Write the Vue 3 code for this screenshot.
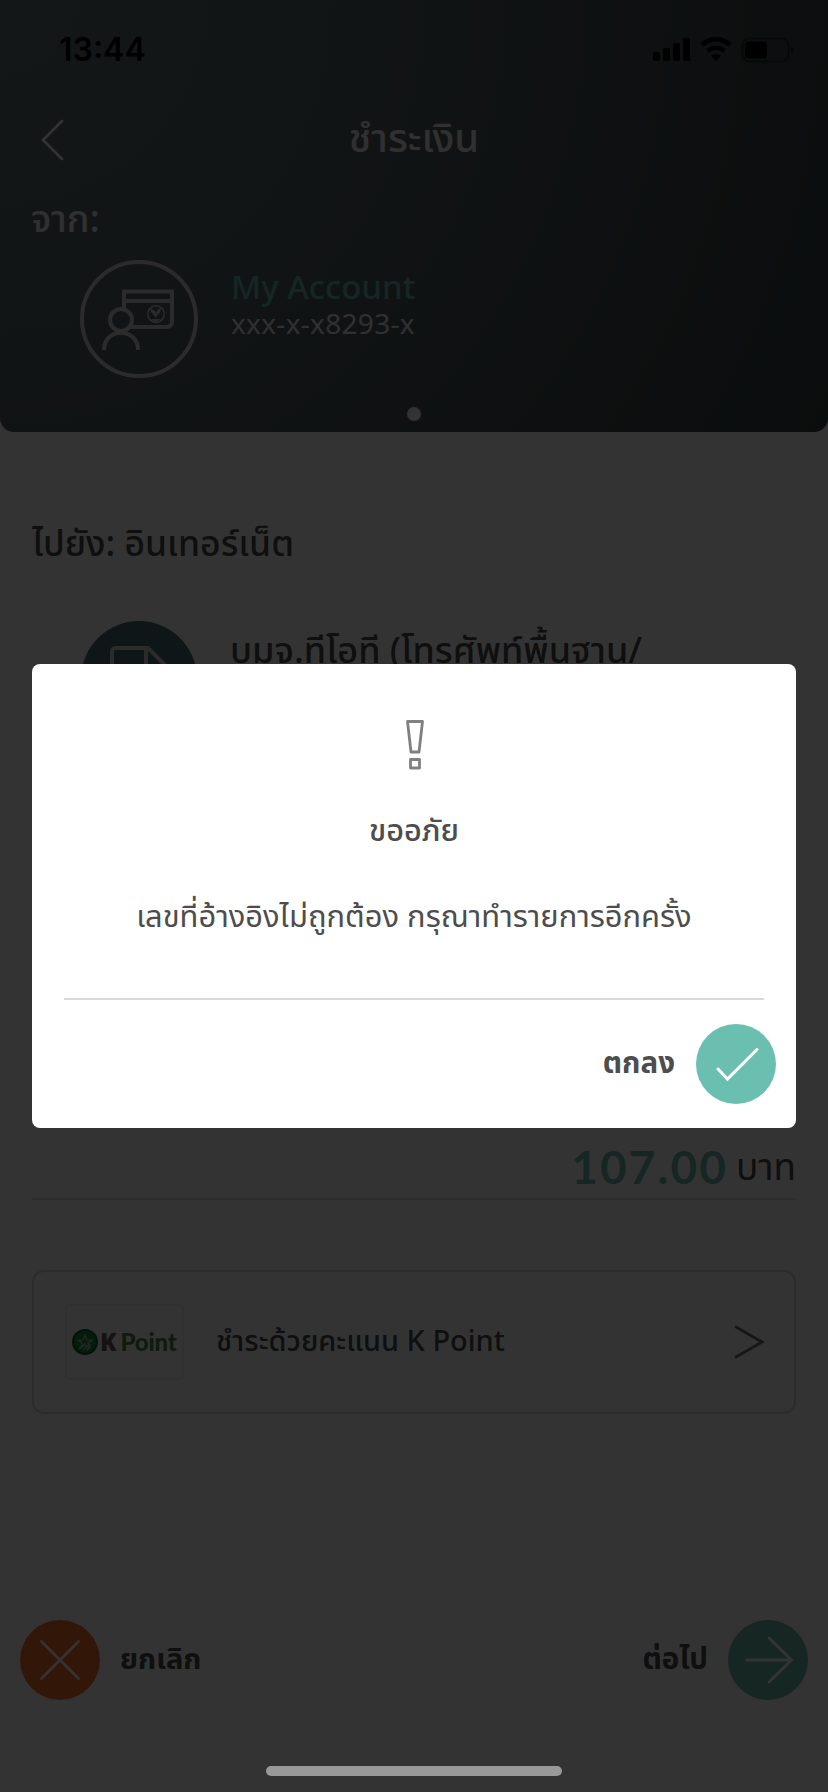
<script setup>
const bars = [9, 13, 18, 23]
</script>

<template>
  <div class="screen">
    <header class="hero">
      <div class="status">
        <span class="time">13:44</span>
        <div class="indicators">
          <div class="signal">
            <i v-for="h in bars" :key="h" :style="{ height: h + 'px' }"></i>
          </div>
          <svg class="wifi" width="32" height="24" viewBox="0 0 32 24">
            <path d="M2 8.2C10 .2 22 .2 30 8.2" fill="none" stroke="#000" stroke-width="4.6" />
            <path d="M7.6 14.2c5-4.6 11.800-4.600 16.800 0" fill="none" stroke="#000" stroke-width="4.400" />
            <path d="M11 18.700c3-2.400 7-2.400 10 0L16 24z" />
          </svg>
          <svg class="battery" width="54" height="26" viewBox="0 0 54 26">
            <rect x="1.500" y="1.500" width="46" height="23" rx="7" fill="none" stroke="#000" stroke-opacity=".4" stroke-width="2" />
            <rect x="4" y="4.500" width="22" height="17" rx="3.500" />
            <path d="M50 9c3.500 1.500 3.500 6.500 0 8z" fill-opacity=".5" />
          </svg>
        </div>
      </div>

      <nav class="nav">
        <svg class="back" width="24" height="42" viewBox="0 0 24 42">
          <path d="M21 2 2 21l19 19" fill="none" stroke="#fff" stroke-width="2.600" stroke-linecap="round" />
        </svg>
        <h1 class="title"><span>ชำระเงิน</span></h1>
      </nav>

      <div class="from"><span>จาก:</span></div>

      <div class="account">
        <svg class="avatar" width="118" height="118" viewBox="0 0 118 118">
          <g fill="none" stroke="#d8d8d8" stroke-width="4">
            <circle cx="59" cy="59" r="57" />
            <path d="M44 50V31.500h48V61q0 6-6 6H50M44 41h48" />
            <circle cx="41" cy="60" r="11" />
            <path d="M24 90c0-23 34-23 34 0" />
          </g>
          <circle cx="76" cy="54" r="8.300" fill="none" stroke="#d8d8d8" stroke-width="1.500" />
          <path d="M70 48l5 3 1.500 2 1-3 3.500-2-1 5-3 2-1 3-2-3-3-3zM71 59h10l-4 2h-3z" fill="#d8d8d8" />
        </svg>
        <div class="who">
          <div class="name"><span>My Account</span></div>
          <div class="number"><span>xxx-x-x8293-x</span></div>
        </div>
      </div>
      <div class="dot"></div>
    </header>

    <main class="body">
      <h2 class="to"><span>ไปยัง: อินเทอร์เน็ต</span></h2>
      <div class="payee">
        <svg width="118" height="118" viewBox="0 0 118 118">
          <circle cx="59" cy="59" r="58" fill="#4b7075" />
          <path d="M32 90V32q0-4 4-4h32l20 20v42zM66 28v22h22" fill="none" stroke="#d8d8d8" stroke-width="4" />
        </svg>
        <div class="payee-name"><span>บมจ.ทีโอที (โทรศัพท์พื้นฐาน/</span></div>
      </div>
      <div class="amount">
        <span class="value">107.00</span>
        <span class="unit">บาท</span>
      </div>
      <div class="points">
        <div class="logo">
          <svg width="26" height="28" viewBox="0 0 26 28">
            <circle cx="13" cy="14" r="12" fill="#168a40" stroke="#086028" stroke-width="2" />
            <path d="m13 7 2 5 5 .3-4 3 1.300 4.500L13 17l-4.300 2.800L10 15.300l-4-3 5-.3z" fill="none" stroke="#a8c8b0" stroke-width="1.200" />
            <path d="m7 21 7-6M11 22l7-6M15 22l4-4" stroke="#a8c8b0" stroke-width="1.200" />
          </svg>
          <b class="k">K</b><b class="point">Point</b>
        </div>
        <div class="points-label"><span>ชำระด้วยคะแนน K Point</span></div>
        <svg class="go" width="30" height="34" viewBox="0 0 30 34">
          <path d="m2 2 26 15L2 32" fill="none" stroke="#707070" stroke-width="2.800" stroke-linecap="round" />
        </svg>
      </div>
    </main>

    <footer class="actions">
      <div class="action">
        <svg width="80" height="80" viewBox="0 0 80 80">
          <circle cx="40" cy="40" r="40" fill="#fa7530" />
          <path d="m21.500 21.500 37 37M58.500 21.500l-37 37" stroke="#fff" stroke-width="2.800" stroke-linecap="round" />
        </svg>
        <span class="cancel">ยกเลิก</span>
      </div>
      <div class="action">
        <span class="next">ต่อไป</span>
        <svg width="80" height="80" viewBox="0 0 80 80">
          <circle cx="40" cy="40" r="40" fill="#6bbfb0" />
          <path d="M18.500 40h45M41 18l22.500 22L41 62" fill="none" stroke="#fff" stroke-width="2.800" stroke-linecap="round" />
        </svg>
      </div>
    </footer>

    <div class="overlay">
      <section class="dialog">
        <svg class="bang" width="20" height="52" viewBox="0 0 20 52">
          <g fill="none" stroke="#808080" stroke-width="2.800" stroke-linejoin="round">
            <path d="M2.500 2.500h15L14 33H6z" />
            <path d="M5.500 40.500h9v8.500h-9z" />
          </g>
        </svg>
        <div class="sorry"><span>ขออภัย</span></div>
        <p class="message"><span>เลขที่อ้างอิงไม่ถูกต้อง กรุณาทำรายการอีกครั้ง</span></p>
        <div class="confirm">
          <span class="ok">ตกลง</span>
          <svg width="80" height="80" viewBox="0 0 80 80">
            <circle cx="40" cy="40" r="40" fill="#6bbfb0" />
            <path d="m22 45 9.500 10L61 25.500" fill="none" stroke="#fff" stroke-width="3" stroke-linecap="round" />
          </svg>
        </div>
      </section>
      <div class="home"></div>
    </div>
  </div>
</template>

<style>
body { margin: 0; background: #fff; }
</style>

<style scoped>
.screen {
  position: relative;
  display: flex;
  flex-direction: column;
  width: 828px;
  height: 1792px;
  overflow: hidden;
  box-sizing: border-box;
  background: #fff;
  color: #4d4d4d;
  font-family: "Noto Sans Thai", "Noto Sans", "Open Sans", sans-serif;
  white-space: nowrap;
}
svg { display: block; flex: none; }
h1, h2, p { margin: 0; font-weight: 500; }
.hero {
  height: 432px;
  border-radius: 0 0 14px 14px;
  background: radial-gradient(circle at 0 0, #627478 0%, #59686b 35%, #434e51 75%, #364043 100%);
  color: #fff;
}
.status {
  display: flex;
  justify-content: space-between;
  height: 88px;
  padding: 0 33px 0 59px;
  color: #000;
}
.time { font: 600 32px/40px Inter, sans-serif; margin-top: 30px; }
.indicators { display: flex; align-items: flex-start; padding-top: 37px; }
.signal { display: flex; align-items: flex-end; gap: 3px; height: 24px; margin-right: 10px; }
.signal i { width: 7px; background: #000; border-radius: 1.500px; }
.wifi { margin-right: 9px; }
.nav { display: flex; align-items: center; height: 104px; padding-left: 41px; }
.back { margin-right: -65px; }
.title { flex: 1; text-align: center; font-size: 40px; line-height: 50px; color: #eee; }
.from { padding-left: 31px; height: 68px; font-size: 37.500px; line-height: 57px; font-weight: 500; color: #eee; }
.account { display: flex; gap: 33px; padding-left: 80px; height: 118px; }
.name { margin-top: 10px; font-size: 33px; line-height: 38px; font-weight: 500; color: #6bbfb0; }
.number { font-size: 28px; line-height: 35px; letter-spacing: .3px; color: #eee; }
.dot { width: 14px; height: 14px; margin: 29px auto 0; border-radius: 50%; background: #fff; }
.body { display: flex; flex-direction: column; padding: 0 32px; }
.to { margin-top: 82px; height: 106px; font-size: 35.500px; line-height: 62px; }
.payee { display: flex; gap: 32px; padding-left: 48px; height: 526px; }
.payee-name { font-size: 36px; line-height: 65px; font-weight: 500; }
.amount { display: flex; align-items: baseline; justify-content: flex-end; box-sizing: border-box; height: 54px; padding-bottom: 4px; gap: 8px; border-bottom: 2px solid #e2e2e2; }
.value { font: 700 46px/50px Lato, sans-serif; letter-spacing: 2.100px; color: #6bbfb0; transform: translateY(-4px); }
.unit { font-size: 37px; line-height: 50px; padding-right: 0; transform: translateY(-8px); }
.points { box-sizing: border-box; display: flex; align-items: center; height: 144px; margin-top: 70px; border: 2px solid #d6d6d6; border-radius: 12px; padding: 0 30px 0 31px; }
.logo { box-sizing: border-box; display: flex; align-items: center; width: 119px; height: 76px; border: 2px solid #f0f0f0; border-radius: 5px; padding-left: 5px; font: 700 24px/30px "Open Sans", sans-serif; }
.k { margin-left: 2px; color: #6a5c58; }
.point { margin-left: 4px; font-size: 24px; letter-spacing: -.2px; color: #4e8550; font-family: Lato, sans-serif; }
.points-label { flex: 1; margin-left: 32px; font-size: 28.900px; font-weight: 500; }
.actions { display: flex; justify-content: space-between; padding: 206px 20px 0; font-size: 29px; font-weight: 700; }
.action { display: flex; align-items: center; gap: 20px; }
.next { font-size: 29.500px; }
.overlay { position: absolute; inset: 0; background: rgba(0, 0, 0, .8); }
.dialog { box-sizing: border-box; width: 764px; height: 464px; margin: 664px auto 0; border-radius: 8px; background: #fff; display: flex; flex-direction: column; align-items: center; padding-top: 55px; }
.bang { margin-left: 1px; }
.sorry { margin-top: 36px; font-size: 30.700px; line-height: 50px; font-weight: 500; }
.message { display: flex; align-items: flex-start; justify-content: center; box-sizing: border-box; width: 700px; height: 143px; padding-top: 36px; font-size: 30.900px; line-height: 50px; font-weight: 400; border-bottom: 2px solid #d9d9d9; }
.confirm { display: flex; align-items: center; align-self: flex-end; gap: 21px; margin: 24px 20px 0 0; font-size: 29.500px; font-weight: 700; }
.home { width: 296px; height: 10px; margin: 638px auto 0; border-radius: 5px; background: #999; }
</style>
